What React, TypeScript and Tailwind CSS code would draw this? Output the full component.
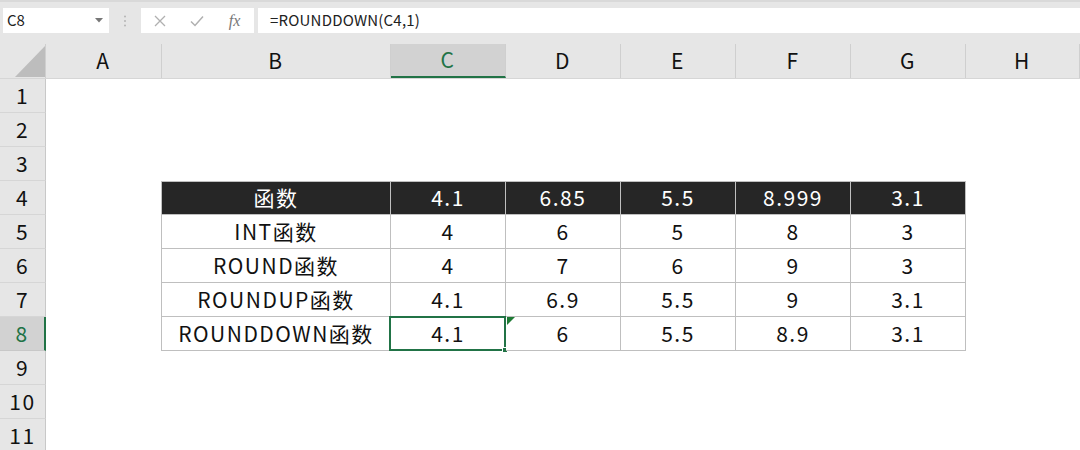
import React from "react";

const FONT = { fontFamily: '"Noto Sans CJK SC", "Noto Sans", sans-serif' };

const cols = ["A", "B", "C", "D", "E", "F", "G", "H"];

const table: string[][] = [
  ["函数", "4.1", "6.85", "5.5", "8.999", "3.1"],
  ["INT函数", "4", "6", "5", "8", "3"],
  ["ROUND函数", "4", "7", "6", "9", "3"],
  ["ROUNDUP函数", "4.1", "6.9", "5.5", "9", "3.1"],
  ["ROUNDDOWN函数", "4.1", "6", "5.5", "8.9", "3.1"],
];

function Toolbar() {
  return (
    <div className="h-[44px] bg-[#e6e6e6] border-t-[2px] border-[#d9d9d9] flex items-start pt-[6px] pl-[3px]">
      <div className="w-[106px] h-[25px] bg-white flex items-center justify-between pl-[4px] pr-[6px]">
        <span className="text-[15px] text-[#222]">C8</span>
        <svg width="8" height="5" viewBox="0 0 8 5">
          <path d="M0 0 L8 0 L4 4.5 Z" fill="#777" />
        </svg>
      </div>
      <div className="w-[32px] h-[25px] flex items-center justify-center">
        <svg width="4" height="12" viewBox="0 0 4 12">
          <circle cx="2" cy="1.5" r="1" fill="#b5b5b5" />
          <circle cx="2" cy="6" r="1" fill="#b5b5b5" />
          <circle cx="2" cy="10.5" r="1" fill="#b5b5b5" />
        </svg>
      </div>
      <div className="w-[113px] h-[25px] bg-white flex items-center">
        <div className="w-[38px] flex justify-center">
          <svg width="12" height="12" viewBox="0 0 12 12">
            <path d="M1 1 L11 11 M11 1 L1 11" stroke="#b0b0b0" strokeWidth="1.3" fill="none" />
          </svg>
        </div>
        <div className="w-[36px] flex justify-center">
          <svg width="14" height="12" viewBox="0 0 14 12">
            <path d="M1 6.5 L5 10.5 L13 1.5" stroke="#b0b0b0" strokeWidth="1.5" fill="none" />
          </svg>
        </div>
        <div className="w-[39px] flex justify-center">
          <span
            className="text-[16px] italic text-[#777]"
            style={{ fontFamily: '"Liberation Serif", serif' }}
          >
            fx
          </span>
        </div>
      </div>
      <div className="flex-1 h-[25px] bg-white ml-[4px] flex items-center pl-[12px]">
        <span className="text-[15px] tracking-[0.2px] text-[#222]">=ROUNDDOWN(C4,1)</span>
      </div>
    </div>
  );
}

function ColumnHeader() {
  return (
    <div className="grid grid-cols-[46px_116px_229px_115px_115px_115px_115px_115px_114px] h-[35px] bg-[#e6e6e6] border-b border-[#d6d6d6]">
      <div className="relative border-r border-[#cfcfcf]">
        <svg className="absolute left-[15px] top-[2px]" width="30" height="31" viewBox="0 0 30 31">
          <path d="M30 0 L30 31 L0 31 Z" fill="#bdbdbd" />
        </svg>
      </div>
      {cols.map((c) => {
        const sel = c === "C";
        return (
          <div
            key={c}
            className={
              sel
                ? "flex items-center justify-center bg-[#d2d2d2] text-[#217346] border-b-[2px] border-[#217346] text-[21px] tracking-[1.5px] border-r border-r-[#cfcfcf]"
                : "flex items-center justify-center text-[#111] text-[21px] tracking-[1.5px] border-r border-[#cfcfcf]"
            }
          >
            {c}
          </div>
        );
      })}
    </div>
  );
}

function Row({ n }: { n: number }) {
  const ti = n - 4;
  const inTable = ti >= 0 && ti < table.length;
  const sel = n === 8;
  return (
    <div className="grid grid-cols-[46px_116px_229px_115px_115px_115px_115px_115px_114px] h-[34px]">
      <div
        className={
          sel
            ? "flex items-center justify-center bg-[#d2d2d2] text-[#217346] text-[21px] tracking-[1.5px] border-r-[2px] border-[#217346] border-b border-b-[#c8c8c8]"
            : "flex items-center justify-center bg-[#e6e6e6] text-[#111] text-[21px] tracking-[1.5px] border-r border-[#c8c8c8] border-b border-b-[#d6d6d6]"
        }
      >
        {n}
      </div>
      <div className="bg-white" />
      {inTable ? (
        table[ti].map((v, i) => {
          const head = ti === 0;
          const isSel = sel && i === 1;
          const isD = sel && i === 2;
          return (
            <div
              key={i}
              className={[
                "relative flex items-center justify-center text-[21px] tracking-[1.5px] border-r border-b border-[#bfbfbf]",
                i === 0 ? "border-l -ml-px" : "",
                head ? "bg-[#262626] text-white border-t" : "bg-white text-[#111]",
              ].join(" ")}
            >
              {v}
              {isSel && (
                <div className="absolute -left-[2px] -top-[1px] -right-[1px] -bottom-[1px] border-[2px] border-[#217346]">
                  <div className="absolute -right-[4px] -bottom-[4px] w-[6px] h-[6px] bg-[#217346] border border-white" />
                </div>
              )}
              {isD && (
                <svg className="absolute left-[1px] top-0" width="8" height="8" viewBox="0 0 8 8">
                  <path d="M0 0 L8 0 L0 8 Z" fill="#1e7a34" />
                </svg>
              )}
            </div>
          );
        })
      ) : (
        <>
          <div className="bg-white" />
          <div className="bg-white" />
          <div className="bg-white" />
          <div className="bg-white" />
          <div className="bg-white" />
          <div className="bg-white" />
        </>
      )}
      <div className="bg-white" />
    </div>
  );
}

export default function App() {
  const rows = [1, 2, 3, 4, 5, 6, 7, 8, 9, 10, 11];
  return (
    <div className="w-[1080px] h-[450px] overflow-hidden bg-white" style={FONT}>
      <Toolbar />
      <ColumnHeader />
      {rows.map((n) => (
        <Row key={n} n={n} />
      ))}
    </div>
  );
}
